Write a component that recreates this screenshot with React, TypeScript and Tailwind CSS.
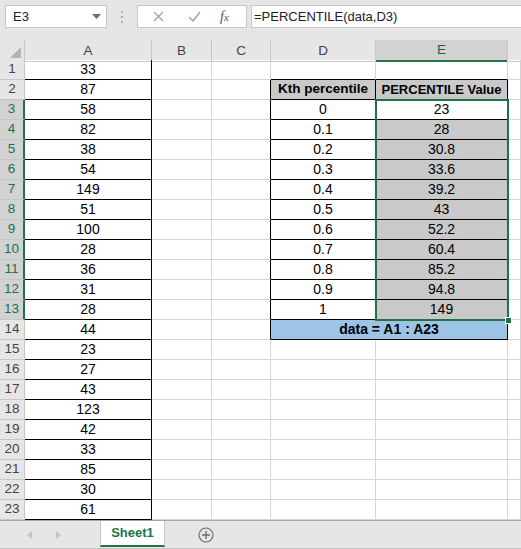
import React from "react";

const colA = [33, 87, 58, 82, 38, 54, 149, 51, 100, 28, 36, 31, 28, 44, 23, 27, 43, 123, 42, 33, 85, 30, 61];
const kth = ["0", "0.1", "0.2", "0.3", "0.4", "0.5", "0.6", "0.7", "0.8", "0.9", "1"];
const vals = ["23", "28", "30.8", "33.6", "39.2", "43", "52.2", "60.4", "85.2", "94.8", "149"];

const grid = "grid grid-cols-[25px_127px_60px_59px_105px_132px_1fr]";
const cellBase = "h-5 flex items-center justify-center border-r border-b text-[14px] text-black";

function RowHeader({ n }: { n: number }) {
    const sel = n >= 3 && n <= 13;
    return (
        <div
            className={
                sel
                    ? "h-5 flex items-center justify-center bg-[#d2d2d2] border-b border-b-[#c6c6c6] border-r-2 border-r-[#217346] text-[13.5px] text-[#217346]"
                    : "h-5 flex items-center justify-center bg-[#e6e6e6] border-b border-b-[#c6c6c6] border-r border-r-[#c6c6c6] text-[13.5px] text-[#444]"
            }
        >
            {n}
        </div>
    );
}

function Row({ n }: { n: number }) {
    const inTable = n >= 3 && n <= 13;
    return (
        <>
            <RowHeader n={n} />
            <div className={`${cellBase} border-r-black border-b-black`}>{colA[n - 1]}</div>
            <div className={`${cellBase} border-[#d4d4d4]`} />
            <div
                className={
                    n >= 2 && n <= 14
                        ? `${cellBase} border-r-black border-b-[#d4d4d4]`
                        : `${cellBase} border-[#d4d4d4]`
                }
            />
            {n === 1 && (
                <>
                    <div className={`${cellBase} border-r-[#d4d4d4] border-b-black`} />
                    <div className={`${cellBase} border-r-[#d4d4d4] border-b-black`} />
                </>
            )}
            {n === 2 && (
                <>
                    <div className={`${cellBase} border-black bg-[#c9c9c9] font-bold !text-[13.5px]`}>Kth percentile</div>
                    <div className={`${cellBase} border-black bg-[#c9c9c9] font-bold !text-[13px]`}>PERCENTILE Value</div>
                </>
            )}
            {inTable && (
                <>
                    <div className={`${cellBase} border-black`}>{kth[n - 3]}</div>
                    <div className={n === 3 ? `${cellBase} border-black` : `${cellBase} border-black bg-[#c9c9c9]`}>
                        {vals[n - 3]}
                    </div>
                </>
            )}
            {n === 14 && (
                <div className={`${cellBase} col-span-2 border-black bg-[#9dc3e6] font-bold`}>data = A1 : A23</div>
            )}
            {n > 14 && (
                <>
                    <div className={`${cellBase} border-[#d4d4d4]`} />
                    <div className={`${cellBase} border-[#d4d4d4]`} />
                </>
            )}
            <div className={`${cellBase} border-[#d4d4d4]`} />
        </>
    );
}

export default function App() {
    return (
        <div className="w-[521px] h-[549px] overflow-hidden bg-white font-['Liberation_Sans',Arial,sans-serif] select-none">
            {/* formula bar */}
            <div className="h-10 bg-[#e6e6e6] flex items-start pt-[5px]">
                <div className="ml-[5px] w-[102px] h-[23px] bg-white border border-[#c6c6c6] flex items-center justify-between pl-[7px] pr-[5px]">
                    <span className="text-[13px] text-[#222]">E3</span>
                    <svg width="9" height="6" viewBox="0 0 9 6">
                        <path d="M0 0 L9 0 L4.5 5 Z" fill="#6f6f6f" />
                    </svg>
                </div>
                <div className="w-[30px] h-[23px] flex flex-col items-center justify-center gap-[3px]">
                    <span className="w-[2px] h-[2px] bg-[#b0b0b0]" />
                    <span className="w-[2px] h-[2px] bg-[#b0b0b0]" />
                    <span className="w-[2px] h-[2px] bg-[#b0b0b0]" />
                </div>
                <div className="w-[110px] h-[23px] bg-white border border-[#c6c6c6] flex items-center">
                    <svg className="ml-[15px]" width="11" height="11" viewBox="0 0 11 11">
                        <path d="M1 1 L10 10 M10 1 L1 10" stroke="#a6a6a6" strokeWidth="1.4" />
                    </svg>
                    <svg className="ml-[24px]" width="13" height="11" viewBox="0 0 13 11">
                        <path d="M1 6 L5 10 L12 1" stroke="#a6a6a6" strokeWidth="1.6" fill="none" />
                    </svg>
                    <span className="ml-[19px] font-['Liberation_Serif',serif] italic text-[14px] text-[#555]">
                        f<span className="text-[11px]">x</span>
                    </span>
                </div>
                <div className="ml-[4px] flex-1 h-[23px] bg-white border border-r-0 border-[#c6c6c6] flex items-center pl-[2px]">
                    <span className="text-[13px] text-[#222]">=PERCENTILE(data,D3)</span>
                </div>
            </div>

            {/* column headers */}
            <div className={`${grid} h-5 bg-[#e6e6e6]`}>
                <div className="relative border-r border-b border-[#c6c6c6]">
                    <svg className="absolute right-[3px] bottom-[3px]" width="11" height="11" viewBox="0 0 11 11">
                        <path d="M11 0 L11 11 L0 11 Z" fill="#b4b4b4" />
                    </svg>
                </div>
                {["A", "B", "C", "D"].map((c) => (
                    <div
                        key={c}
                        className="flex items-center justify-center border-r border-b border-[#c6c6c6] text-[13.5px] text-[#444]"
                    >
                        {c}
                    </div>
                ))}
                <div className="flex items-center justify-center bg-[#d2d2d2] border-r border-r-[#c6c6c6] border-b-2 border-b-[#217346] text-[13.5px] text-[#1f5d3a]">
                    E
                </div>
                <div className="border-b border-[#c6c6c6]" />
            </div>

            {/* cells */}
            <div className={`${grid} relative`}>
                {colA.map((_, i) => (
                    <Row key={i} n={i + 1} />
                ))}
                <div className="absolute left-[375px] top-[39px] w-[134px] h-[222px] border-2 border-[#217346] pointer-events-none">
                    <div className="absolute right-[-5px] bottom-[-5px] w-[7px] h-[7px] bg-[#217346] border border-white" />
                </div>
            </div>

            {/* sheet tabs */}
            <div className="h-[29px] bg-[#e6e6e6] border-t border-[#a6a6a6] border-b border-b-[#c6c6c6] flex items-start">
                <div className="w-[100px] h-full flex items-center">
                    <svg className="ml-[27px]" width="5" height="8" viewBox="0 0 5 8">
                        <path d="M5 0 L5 8 L0 4 Z" fill="#c6c6c6" />
                    </svg>
                    <svg className="ml-[24px]" width="5" height="8" viewBox="0 0 5 8">
                        <path d="M0 0 L0 8 L5 4 Z" fill="#c6c6c6" />
                    </svg>
                </div>
                <div className="w-[65px] h-[26px] bg-white border-x border-[#c6c6c6] border-b-2 border-b-[#217346] flex items-center justify-center">
                    <span className="text-[13px] font-bold text-[#217346]">Sheet1</span>
                </div>
                <div className="ml-[33px] h-full flex items-center">
                    <svg width="16" height="16" viewBox="0 0 16 16">
                        <circle cx="8" cy="8" r="7" fill="none" stroke="#6f6f6f" strokeWidth="1.2" />
                        <path d="M8 4 V12 M4 8 H12" stroke="#6f6f6f" strokeWidth="1.4" />
                    </svg>
                </div>
            </div>
        </div>
    );
}
